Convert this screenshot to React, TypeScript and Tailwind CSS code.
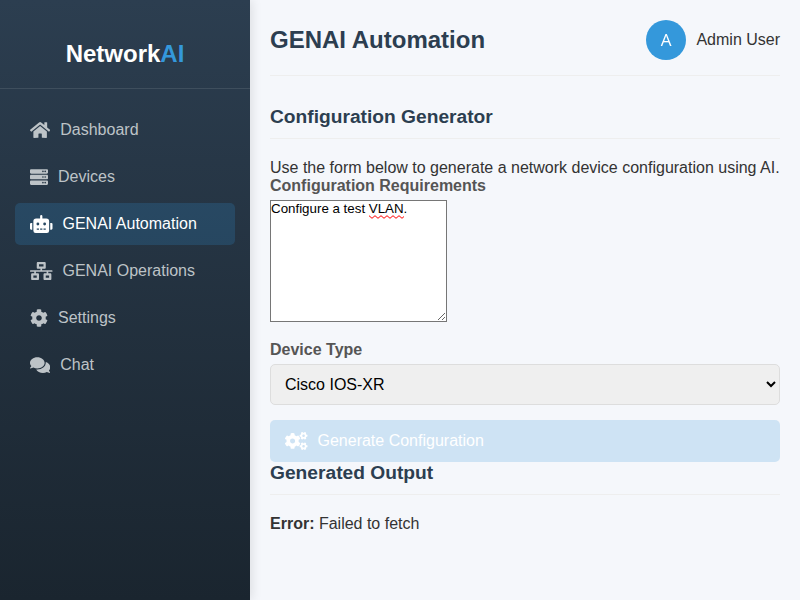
import { FaCogs, FaCog, FaComments, FaHome, FaNetworkWired, FaRobot, FaServer } from "react-icons/fa";

const navItems = [
  { label: "Dashboard", Icon: FaHome, width: "w-[20.25px]" },
  { label: "Devices", Icon: FaServer, width: "w-[18px]" },
  { label: "GENAI Automation", Icon: FaRobot, width: "w-[22.5px]", active: true },
  { label: "GENAI Operations", Icon: FaNetworkWired, width: "w-[22.5px]" },
  { label: "Settings", Icon: FaCog, width: "w-[18px]" },
  { label: "Chat", Icon: FaComments, width: "w-[20.25px]" },
];

function Sidebar() {
  return (
    <aside className="relative z-10 w-[250px] shrink-0 bg-linear-to-b from-[#2c3e50] to-[#1a252f] shadow-[2px_0_10px_rgba(0,0,0,0.1)]">
      <div className="border-b border-white/10 pt-10 pb-5 text-center text-2xl leading-7 font-bold text-white">
        Network<span className="text-[#3498db]">AI</span>
      </div>
      <nav className="flex flex-col gap-[5px] px-[15px] pt-5">
        {navItems.map(({ label, Icon, width, active }) => (
          <a
            key={label}
            className={`flex h-[42px] items-center gap-2.5 rounded-[5px] px-[15px] ${
              active ? "bg-[#3498db]/20 text-white" : "text-[#bdc3c7]"
            }`}
          >
            <Icon className={`h-[18px] shrink-0 ${width}`} />
            <span>{label}</span>
          </a>
        ))}
      </nav>
    </aside>
  );
}

function SectionTitle({ children }: { children: string }) {
  return (
    <h3 className="mb-5 border-b border-[#eeeeee] pb-2.5 text-[19.2px] leading-[22px] font-bold text-[#2c3e50]">
      {children}
    </h3>
  );
}

export default function App() {
  return (
    <div className="flex h-screen overflow-hidden bg-[#f5f7fb] font-['Liberation_Sans',Arial,sans-serif] text-base leading-[18px] text-[#333]">
      <Sidebar />
      <main className="min-w-0 flex-1 p-5">
        <header className="mb-[30px] flex items-center justify-between border-b border-[#eeeeee] pb-[15px]">
          <h1 className="text-2xl leading-7 font-bold text-[#2c3e50]">GENAI Automation</h1>
          <div className="flex items-center gap-2.5">
            <svg viewBox="0 0 40 40" className="size-10 rounded-full will-change-transform">
              <rect width="40" height="40" fill="#3498db" />
              <text x="20" y="26" textAnchor="middle" fill="#fff" className="font-['Open_Sans',sans-serif] text-[17px]">
                A
              </text>
            </svg>
            <span>Admin User</span>
          </div>
        </header>

        <SectionTitle>Configuration Generator</SectionTitle>
        <p className="whitespace-nowrap">Use the form below to generate a network device configuration using AI.</p>
        <label className="mb-[5px] block font-bold text-[#555]">Configuration Requirements</label>
        <div className="relative mb-[19px] w-[177px]">
          <textarea
            rows={8}
            spellCheck={false}
            defaultValue="Configure a test VLAN."
            className="block h-[122px] w-[177px] resize border border-[#767676] bg-white text-[13.333px] leading-[15px] text-black"
          />
          {/* Spelling mark under "VLAN" */}
          <svg viewBox="0 0 35 4" className="pointer-events-none absolute top-[15px] left-[99px] h-1 w-[35px]">
            <path
              d="M0 .7l3 2.6 3-2.6 3 2.6 3-2.6 3 2.6 3-2.6 3 2.6 3-2.6 3 2.6 3-2.6 3 2.6 2-1.8"
              fill="none"
              stroke="#f00"
              strokeWidth="1"
            />
          </svg>
        </div>
        <label className="mb-[5px] block font-bold text-[#555]">Device Type</label>
        <select className="mb-[15px] block h-[41px] w-full rounded-[5px] border border-[#ddd] bg-[#efefef] p-2.5 text-base text-black">
          <option>Cisco IOS-XR</option>
        </select>
        <button className="flex h-[42px] w-full items-center gap-2.5 rounded-[5px] bg-[#3498db]/20 px-[15px] text-white">
          <FaCogs className="h-[18px] w-[22.5px] shrink-0" />
          Generate Configuration
        </button>

        <SectionTitle>Generated Output</SectionTitle>
        <p>
          <strong className="font-bold">Error:</strong> Failed to fetch
        </p>
      </main>
    </div>
  );
}
